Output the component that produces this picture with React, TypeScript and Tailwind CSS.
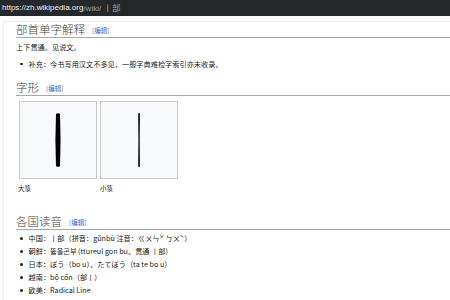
const body = '"Noto Sans CJK SC", "Liberation Sans", sans-serif';

function EditLink() {
  return (
    <span className="ml-[7px] text-[6.5px] text-[#72777d]" style={{ fontFamily: body }}>
      [<span className="text-[#3366cc]">编辑</span>]
    </span>
  );
}

function Heading({ title, mt }: { title: string; mt: string }) {
  return (
    <div className={`${mt} flex items-end pb-[1px] border-b border-[#a2a9b1]`}>
      <span className="text-[11.5px] leading-[14px] text-[#444] font-light">{title}</span>
      <EditLink />
    </div>
  );
}

function Bullet({ children, mt = '' }: { children: React.ReactNode; mt?: string }) {
  return (
    <li className={`${mt} flex items-center`}>
      <span className="ml-[4px] mr-[6px] w-[2.5px] h-[2.5px] rounded-full bg-[#202122]" />
      <span>{children}</span>
    </li>
  );
}

function Glyph({ thick }: { thick: boolean }) {
  return (
    <div className="w-[78px] h-[78px] border border-[#c8ccd1] bg-[#f8f9fa] flex items-center justify-center">
      <svg width="12" height="56" viewBox="0 0 12 56">
        {thick ? (
          <path d="M4 2 Q6 0.3 8 2 L8.6 28 L8 54 Q6 55.7 4 54 L3.4 28 Z" fill="#000" />
        ) : (
          <path d="M5.2 1.5 Q6 0.6 6.9 1.5 L6.7 28 L6.9 54.5 Q6 55.4 5.2 54.5 L5.4 28 Z" fill="#000" />
        )}
      </svg>
    </div>
  );
}

export default function App() {
  return (
    <div className="w-[450px] h-[300px] overflow-hidden bg-white" style={{ fontFamily: body }}>
      {/* Address bar */}
      <div className="h-[16px] bg-[#25282b] flex items-center pl-[2px] text-[8px]" style={{ fontFamily: '"Liberation Sans", "Noto Sans CJK SC", sans-serif' }}>
        <span className="text-[#eef0f2]">https://zh.wikipedia.org</span>
        <span className="text-[#9aa0a6]">/wiki/ <span className="text-[8.5px]">丨部</span></span>
      </div>

      <div className="pl-[3px]">
        <div className="mt-[5px] h-[290px] border-l border-t border-[#eceef0] pl-[12px] text-[7.2px] text-[#202122]">
          <Heading title="部首单字解释" mt="mt-[0px]" />
          <p className="mt-[3px] leading-[12px]">上下贯通。见说文。</p>
          <ul className="mt-[5px] leading-[12px]">
            <Bullet>补充：今书写用汉文不多见，一般字典难检字索引亦未收录。</Bullet>
          </ul>

          <Heading title="字形" mt="mt-[10px]" />
          <div className="mt-[5px] ml-[3px] flex gap-[3px]">
            <div className="flex flex-col">
              <Glyph thick />
              <span className="mt-[3px] -ml-[1px] leading-[12px] text-[6.5px]">大篆</span>
            </div>
            <div className="flex flex-col">
              <Glyph thick={false} />
              <span className="mt-[3px] leading-[12px] text-[6.5px]">小篆</span>
            </div>
          </div>

          <Heading title="各国读音" mt="mt-[20px]" />
          <ul className="mt-[2px] leading-[13px]">
            <Bullet>中国：丨部（拼音：gǔnbù 注音：ㄍㄨㄣˇ ㄅㄨˋ）</Bullet>
            <Bullet>朝鲜：뚫을곤부 (ttureul gon bu、贯通 丨部)</Bullet>
            <Bullet>日本：ぼう（bo u）、たてぼう（ta te bo u）</Bullet>
            <Bullet>越南：bộ cổn（部丨）</Bullet>
            <Bullet>欧美：Radical Line</Bullet>
          </ul>
        </div>
      </div>
    </div>
  );
}
